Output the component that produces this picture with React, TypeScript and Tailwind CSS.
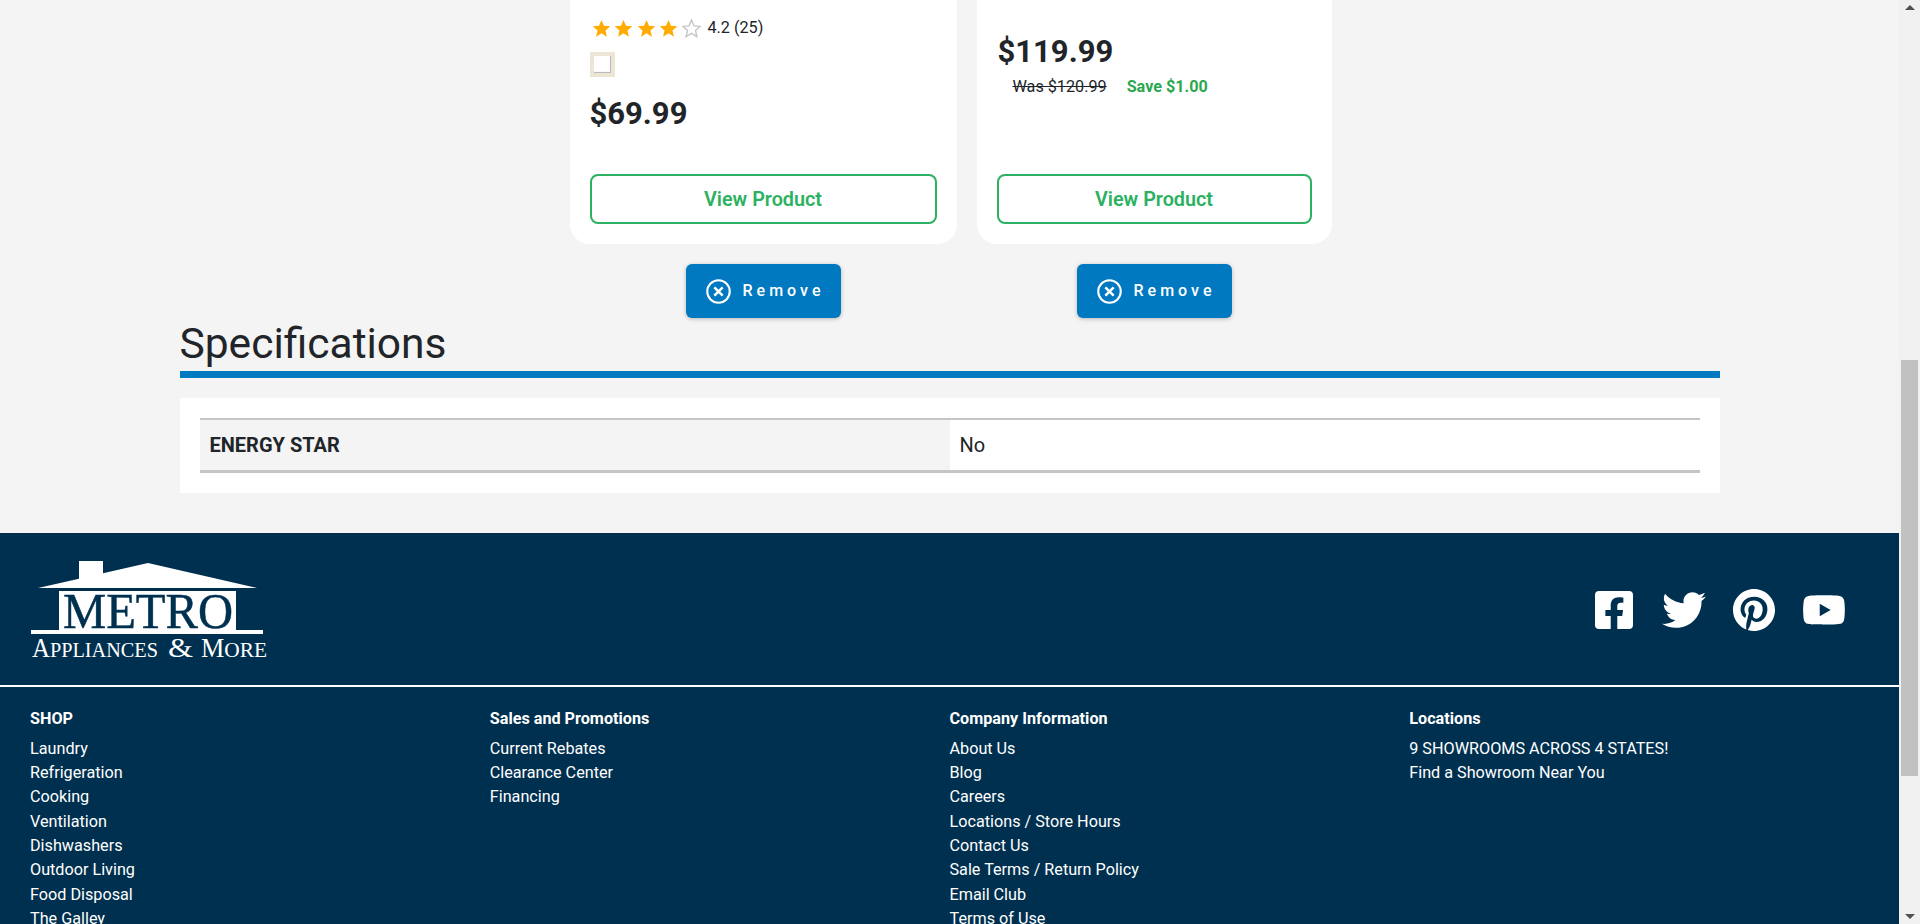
import { FaFacebookSquare, FaPinterest, FaTwitter, FaYoutube } from 'react-icons/fa';

const shopLinks = ['Laundry', 'Refrigeration', 'Cooking', 'Ventilation', 'Dishwashers', 'Outdoor Living', 'Food Disposal', 'The Galley'];
const salesLinks = ['Current Rebates', 'Clearance Center', 'Financing'];
const companyLinks = ['About Us', 'Blog', 'Careers', 'Locations / Store Hours', 'Contact Us', 'Sale Terms / Return Policy', 'Email Club', 'Terms of Use'];
const locationLinks = ['9 SHOWROOMS ACROSS 4 STATES!', 'Find a Showroom Near You'];

const starPoints = '10,1 12.6,7.2 19.2,7.7 14.2,12 15.7,18.6 10,15.1 4.300,18.6 5.800,12 0.800,7.7 7.400,7.200';

function Star({ filled }: { filled: boolean }) {
  return (
    <svg viewBox="0 0 20 20" className="h-[19px] w-[19px]">
      {filled ? (
        <polygon points={starPoints} fill="#ffab00" />
      ) : (
        <polygon points={starPoints} fill="#fff" stroke="#c6c6c6" strokeWidth="1.5" />
      )}
    </svg>
  );
}

function RemoveButton() {
  return (
    <button
      type="button"
      className="flex h-[54px] w-[155px] items-center rounded-md bg-[#0079c1] pl-5 text-base font-medium tracking-[0.25em] text-white shadow-[0_1px_4px_rgba(0,0,0,0.25)]"
    >
      <svg viewBox="0 0 24 24" className="mr-3 h-[25px] w-[25px]" fill="none" stroke="currentColor">
        <circle cx="12" cy="12" r="10.8" strokeWidth="2" />
        <path d="M8 8l8 8M16 8l-8 8" strokeWidth="2.4" />
      </svg>
      Remove
    </button>
  );
}

function ViewProduct() {
  return (
    <button
      type="button"
      className="flex h-[50px] w-full items-center justify-center rounded-lg border-2 border-[#2bb161] bg-white pt-px text-[19.8px] font-semibold text-[#2bb161]"
    >
      View Product
    </button>
  );
}

function LinkColumn({ title, links }: { title: string; links: string[] }) {
  return (
    <div>
      <p className="mb-[6px] text-[16.2px] leading-6 font-bold">{title}</p>
      {links.map((link) => (
        <p key={link} className="text-[16.2px] leading-[24.3px]">
          {link}
        </p>
      ))}
    </div>
  );
}

function Logo() {
  return (
    <svg viewBox="0 0 240 104" className="h-[104px] w-[240px]" fill="#fff">
      <path d="M8 28L49 18.700V1h24v12.200L118 3l109 25z" />
      <path d="M29 31h177v39H29z" />
      <path d="M1 70h232v4H1z" />
      <text x="33" y="68" fill="#00304f" stroke="#00304f" strokeWidth="0.5" fontFamily="Liberation Serif" fontSize="50" textLength="170" lengthAdjust="spacingAndGlyphs">
        METRO
      </text>
      <text x="2" y="97" fontFamily="Liberation Serif" fontSize="22" textLength="126" lengthAdjust="spacingAndGlyphs">
        <tspan fontSize="27">A</tspan>PPLIANCES
      </text>
      <text x="138" y="97" fontFamily="Liberation Serif" fontSize="27" textLength="25" lengthAdjust="spacingAndGlyphs">
        &amp;
      </text>
      <text x="171" y="97" fontFamily="Liberation Serif" fontSize="22" textLength="66" lengthAdjust="spacingAndGlyphs">
        <tspan fontSize="27">M</tspan>ORE
      </text>
    </svg>
  );
}

export default function App() {
  return (
    <div className="flex h-[924px] overflow-hidden bg-[#f4f4f4] font-['Roboto',sans-serif] text-[#212529]">
      <div className="min-w-0 flex-1">
        <div className="mx-auto w-[1540px]">
          <div className="flex gap-5 pl-[390px]">
            <div className="w-[387px]">
              <div className="flex h-[244px] flex-col rounded-b-[20px] bg-white px-5 pb-5">
                <div className="flex h-[56px] items-center pl-[2px] text-[16.2px]">
                  <div className="flex items-center gap-[3.500px]">
                    <Star filled />
                    <Star filled />
                    <Star filled />
                    <Star filled />
                    <Star filled={false} />
                  </div>
                  <span className="ml-[7px]">4.2 (25)</span>
                </div>
                <div className="-mt-1 h-[25px] w-[25px] border-4 border-[#ede6d6] shadow-[inset_-1px_-1px_1px_rgba(0,0,0,0.3)]" />
                <p className="mt-[17px] text-[31px] leading-10 font-bold">$69.99</p>
                <div className="mt-auto">
                  <ViewProduct />
                </div>
              </div>
              <div className="mt-5 flex justify-center">
                <RemoveButton />
              </div>
            </div>
            <div className="w-[355px]">
              <div className="flex h-[244px] flex-col rounded-b-[20px] bg-white pr-5 pb-5 pl-[21px]">
                <p className="mt-[32px] text-[31px] leading-10 font-bold">$119.99</p>
                <div className="mt-[5px] flex pl-[15px] text-[16.2px] leading-5">
                  <span className="line-through">Was $120.99</span>
                  <span className="ml-5 font-bold text-[#2ba84f]">Save $1.00</span>
                </div>
                <div className="mt-auto -ml-px">
                  <ViewProduct />
                </div>
              </div>
              <div className="mt-5 flex justify-center">
                <RemoveButton />
              </div>
            </div>
          </div>

          <h2 className="pb-px text-[42.5px] leading-[52px] font-normal">Specifications</h2>
          <div className="h-[7px] bg-[#0079c1]" />
          <div className="mt-5 bg-white p-5">
            <div className="flex h-[55px] items-stretch border-t-2 border-b-[3px] border-[#c4c5c7] text-[20px]">
              <div className="flex w-[750px] items-center bg-[#f4f4f4] px-[10px] font-bold">ENERGY STAR</div>
              <div className="flex items-center px-[10px]">No</div>
            </div>
          </div>
        </div>

        <div className="mt-10 bg-[#00304f] text-white">
          <div className="flex h-[152px] items-start justify-between pt-[27px] pr-[53px] pl-[30px]">
            <Logo />
            <div className="mt-[28px] flex items-center text-white">
              <FaFacebookSquare className="h-[44px] w-[38px]" />
              <FaTwitter className="ml-[29px] h-[44px] w-[44px]" />
              <FaPinterest className="ml-[27px] h-[44px] w-[42px]" />
              <FaYoutube className="ml-[27px] h-[44px] w-[44px]" />
            </div>
          </div>
          <div className="h-[2px] bg-white" />
          <div className="grid grid-cols-4 px-[30px] pt-[19.800px]">
            <LinkColumn title="SHOP" links={shopLinks} />
            <LinkColumn title="Sales and Promotions" links={salesLinks} />
            <LinkColumn title="Company Information" links={companyLinks} />
            <LinkColumn title="Locations" links={locationLinks} />
          </div>
        </div>
      </div>

      {/* scrollbar of the photographed window */}
      <div className="flex h-full w-[21px] shrink-0 flex-col bg-[#f1f1f1] px-[2px]">
        <div className="flex h-[360px] justify-center pt-[5px]">
          <div className="h-0 w-0 border-x-[5px] border-b-[5px] border-x-transparent border-b-[#505050]" />
        </div>
        <div className="h-[416px] bg-[#c1c1c1]" />
        <div className="flex flex-1 items-end justify-center pb-[5px]">
          <div className="h-0 w-0 border-x-[5px] border-t-[5px] border-x-transparent border-t-[#505050]" />
        </div>
      </div>
    </div>
  );
}
